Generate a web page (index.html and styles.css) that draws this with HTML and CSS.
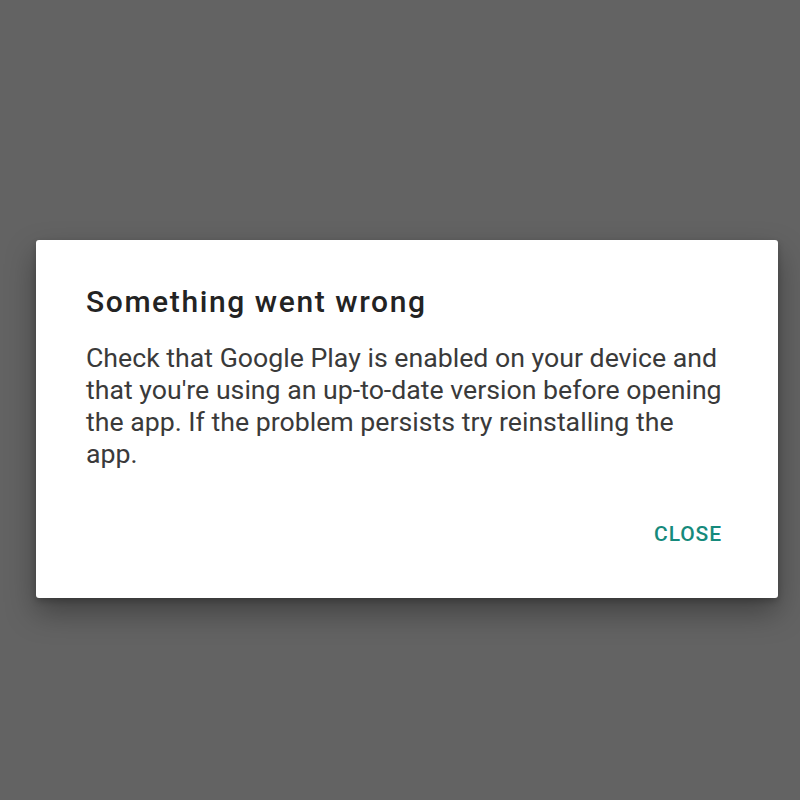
FILE: index.html
```html
<!DOCTYPE html>
<html>
<head>
<meta charset="utf-8">
<link rel="stylesheet" href="styles.css">
</head>
<body>
<div class="screen">
  <div class="dialog">
    <h1 class="title">Something went wrong</h1>
    <p class="message">Check that Google Play is enabled on your device and that you're using an up-to-date version before opening the app. If the problem persists try reinstalling the app.</p>
    <div class="actions">
      <span class="button">CLOSE</span>
    </div>
  </div>
</div>
</body>
</html>
```
FILE: styles.css
```css
html, body {
  margin: 0;
  padding: 0;
}
body {
  background: #636363;
  font-family: Roboto, "Noto Sans", sans-serif;
}
.screen {
  width: 800px;
  height: 800px;
  padding-top: 240px;
  padding-left: 36px;
  box-sizing: border-box;
}
.dialog {
  width: 742px;
  height: 358px;
  box-sizing: border-box;
  background: #fff;
  border-radius: 3px;
  box-shadow: 0 14px 30px rgba(0,0,0,0.35), 0 3px 6px rgba(0,0,0,0.2);
  padding: 46px 52px 0 50px;
}
.title {
  margin: 0;
  font-size: 30px;
  font-weight: 500;
  color: #232323;
  line-height: 32px;
  letter-spacing: 1.6px;
}
.message {
  margin: 24px 0 0 0;
  font-size: 26.7px;
  line-height: 32px;
  color: #3a3a3a;
}
.actions {
  display: flex;
  justify-content: flex-end;
  margin-top: 52px;
  padding-right: 4px;
}
.button {
  font-size: 21px;
  font-weight: 500;
  color: #168a7c;
  letter-spacing: 0.9px;
}
```
